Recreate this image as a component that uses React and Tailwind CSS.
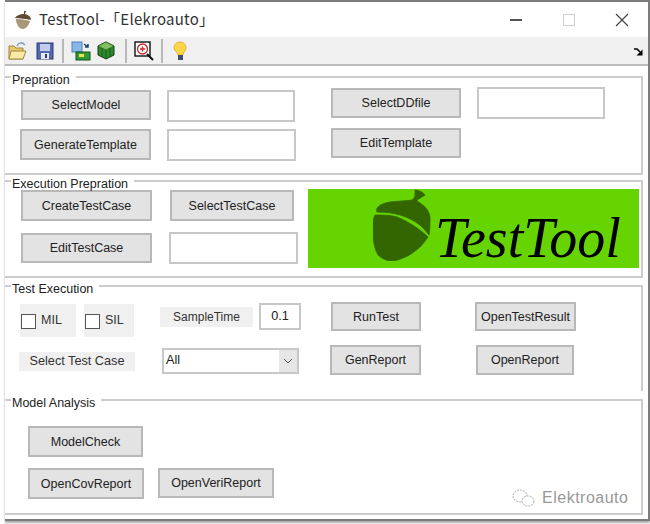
const sans = "font-['Liberation_Sans',Arial,sans-serif]"

function Btn({ w, h = 'h-[30px]', className = '', children }) {
  return (
    <button className={`${w} ${h} ${className} shrink-0 pt-[1px] bg-[#e3e3e3] border-2 border-[#b8b8b8] text-[12.5px] text-[#222] flex items-center justify-center`}>
      {children}
    </button>
  )
}

function Field({ w, className = '', children }) {
  return (
    <div className={`${w} h-[32px] ${className} shrink-0 bg-white border-2 border-[#c8c8c8] text-[12.7px] text-[#222] flex items-center justify-center`}>
      {children}
    </div>
  )
}

function Label({ className = '', children }) {
  return <div className={`${className} shrink-0 bg-[#f0f0f0] text-[#333] flex items-center justify-center`}>{children}</div>
}

function Group({ title, className = '', children }) {
  return (
    <fieldset className={`${className} shrink-0 border-2 border-l-0 border-[#cccccc]`}>
      <legend className="ml-[6px] pl-[1px] pr-[6px] text-[12.5px] leading-[12px] text-[#222]">
        <span className="inline-block translate-y-[3px]">{title}</span>
      </legend>
      {children}
    </fieldset>
  )
}

function Check({ label, w, className = '' }) {
  return (
    <div className={`${w} h-[33px] mt-[2px] ${className} shrink-0 bg-[#f0f0f0] flex items-center pl-[1px] gap-[5px] text-[12.5px] text-[#333]`}>
      <span className="w-[15px] h-[15px] bg-white border border-[#555] mt-[2px]"></span>
      {label}
    </div>
  )
}

function Acorn() {
  return (
    <svg width="58" height="72" viewBox="0 0 58 72" className="shrink-0 self-start">
      <path d="M42 1 C45 1 50 3 52 6 L44 11 C44 12 45 13 47 14 C53 18 57 23 57 29 C57 35 57 41 56 46 C53 42 50 39 47 36 C40 31 34 28 27 26 C20 24 12 23 4 23 C3 21 4 19 5 18 C8 15 12 14 17 13 C25 12 33 12 39 11 C41 9 42 8 42 6 C42 4 42 3 42 1 Z" fill="#336600" stroke="#336600" strokeWidth="0.8" />
      <path d="M2 26 C10 26 17 26 24 28 C32 31 38 35 44 39 C48 42 52 45 55 48 C52 52 50 55 47 58 C41 63 36 67 30 69 C26 71 21 72 17 72 C12 71 8 69 5 66 C2 61 1 55 0 49 C0 43 0 38 0 33 C0 31 1 28 2 26 Z" fill="#336600" stroke="#336600" strokeWidth="0.8" />
    </svg>
  )
}

const icons = {
  open: (
    <svg width="19" height="19" viewBox="0 0 19 19" className="shrink-0">
      <path d="M9 5 C11 1 14 1 17 4" fill="none" stroke="#7a9cc0" strokeWidth="1.5" />
      <path d="M1 5 H6 L8 7 H15 V18 H1 Z" fill="#e8c868" stroke="#a08840" />
      <path d="M1 18 L3 10 H18 L15 18 Z" fill="#fbe9a4" stroke="#a08840" />
    </svg>
  ),
  save: (
    <svg width="18" height="18" viewBox="0 0 18 18" className="shrink-0">
      <rect x="1" y="1" width="16" height="16" fill="#5468b0" stroke="#2c3878" />
      <rect x="4" y="2" width="10" height="7" fill="#c4ccec" />
      <rect x="5" y="11" width="8" height="6" fill="#e8e8f0" />
      <rect x="9" y="12" width="2" height="4" fill="#2c3878" />
    </svg>
  ),
  sim: (
    <svg width="20" height="20" viewBox="0 0 20 20" className="shrink-0">
      <rect x="1" y="1" width="10" height="10" fill="#88b8e8" stroke="#5080b0" />
      <rect x="5" y="11" width="14" height="8" fill="#2f9a3a" stroke="#14501c" />
      <rect x="8" y="13" width="5" height="3" fill="#f0e050" />
      <path d="M13 3 L17 6 M17 3 V6 H14" fill="none" stroke="#204070" strokeWidth="1.5" />
    </svg>
  ),
  cube: (
    <svg width="18" height="19" viewBox="0 0 18 19" className="shrink-0">
      <path d="M9 1 L17 5 V14 L9 18 L1 14 V5 Z" fill="#2e8a2e" stroke="#143c14" />
      <path d="M1 5 L9 9 L17 5 L9 1 Z" fill="#80c060" stroke="#2a5a20" strokeWidth="0.7" />
      <path d="M9 9 V18 M5 7 V16 M13 7 V16" stroke="#145014" strokeWidth="0.8" />
    </svg>
  ),
  zoom: (
    <svg width="20" height="20" viewBox="0 0 20 20" className="shrink-0">
      <rect x="1" y="1" width="15" height="14" fill="#fff" stroke="#111" strokeWidth="1.4" />
      <circle cx="8.5" cy="8" r="5" fill="#fff" stroke="#d02828" strokeWidth="1.3" />
      <path d="M6 8 H11 M8.5 5.5 V10.5" stroke="#d02828" strokeWidth="1.5" />
      <path d="M13 13 L19 19" stroke="#111" strokeWidth="2" />
    </svg>
  ),
  bulb: (
    <svg width="14" height="20" viewBox="0 0 14 20" className="shrink-0">
      <path d="M7 1 C11 1 13 4 13 7 C13 10 10 11 10 14 H5 C5 11 1 10 1 7 C1 4 3 1 7 1 Z" fill="#fbd64a" stroke="#e8b030" />
      <rect x="5" y="14" width="5" height="5" fill="#405068" />
    </svg>
  ),
}

function Sep({ className = '' }) {
  return <span className={`${className} w-[2px] h-[24px] bg-[#b8b8b8] shrink-0`}></span>
}

export default function App() {
  return (
    <div className={`${sans} w-[650px] h-[524px] bg-white overflow-hidden`}>
      <div className="ml-[5px] w-[645px] h-[521px] border-t-2 border-r-2 border-b-2 border-[#7c7c7c] shadow-[0_2px_2px_#aaaaaa] flex flex-col">
        {/* Title bar */}
        <div className="h-[35px] flex items-center shrink-0 pl-[9px] pr-[19px]">
          <svg width="18" height="20" viewBox="0 0 18 20" className="shrink-0">
            <path d="M10 1 L12 1 L11 4 C15 5 17 7 17 10 C12 9 6 8 1 8 C2 6 6 4 10 4 Z" fill="#5e4a32" />
            <path d="M2 9 C7 9 13 10 16 11 C15 15 12 19 9 19 C5 19 2 14 2 9 Z" fill="#a89878" />
          </svg>
          <span className="ml-[7px] text-[15px] tracking-[0.25px] text-[#333] font-['Noto_Sans_CJK_SC',sans-serif]">TestTool-「Elekroauto」</span>
          <span className="ml-auto w-[12px] h-[2px] bg-[#555] shrink-0"></span>
          <span className="ml-[41px] w-[12px] h-[12px] border border-[#cfcfcf] shrink-0"></span>
          <svg width="14" height="14" viewBox="0 0 14 14" className="ml-[40px] shrink-0">
            <path d="M1 1 L13 13 M13 1 L1 13" stroke="#444" strokeWidth="1.2" />
          </svg>
        </div>

        {/* Toolbar */}
        <div className="h-[29px] bg-[#f0f0f0] border-b-2 border-[#bdbdbd] flex items-center shrink-0 pl-[3px]">
          {icons.open}
          <span className="ml-[9px] flex">{icons.save}</span>
          <Sep className="ml-[8px]" />
          <span className="ml-[7px] flex">{icons.sim}</span>
          <span className="ml-[6px] flex">{icons.cube}</span>
          <Sep className="ml-[10px]" />
          <span className="ml-[7px] flex">{icons.zoom}</span>
          <Sep className="ml-[7px]" />
          <span className="ml-[10px] flex">{icons.bulb}</span>
          <svg width="9" height="8" viewBox="0 0 9 8" className="ml-auto mr-[5px] mt-[2px] shrink-0">
            <path d="M0 1 H3 L6 4" fill="none" stroke="#000" strokeWidth="1.6" />
            <path d="M8.5 1.5 V7.5 H2.5 Z" fill="#000" />
          </svg>
        </div>

        <div className="flex-1 flex flex-col mr-[5px]">
          <Group title="Prepration" className="mt-[5px] h-[104px]">
            <div className="flex items-start pl-[16px] pt-[4px]">
              <Btn w="w-[130px]" className="mt-[3px]">SelectModel</Btn>
              <Field w="w-[128px]" className="ml-[16px] mt-[3px]" />
              <Btn w="w-[130px]" className="ml-[36px] mt-[1px]">SelectDDfile</Btn>
              <Field w="w-[128px]" className="ml-[16px]" />
            </div>
            <div className="flex items-start pl-[15px] mt-[6px]">
              <Btn w="w-[131px]" h="h-[31px]" className="mt-[1px]">GenerateTemplate</Btn>
              <Field w="w-[129px]" className="ml-[16px] mt-[1px]" />
              <Btn w="w-[130px]" className="ml-[35px]">EditTemplate</Btn>
            </div>
          </Group>

          <Group title="Execution Prepration" className="h-[103px]">
            <div className="flex items-start pl-[16px]">
              <div className="flex flex-col w-[276px] shrink-0 mt-[3px]">
                <div className="flex items-start">
                  <Btn w="w-[131px]" h="h-[31px]">CreateTestCase</Btn>
                  <Btn w="w-[124px]" h="h-[31px]" className="ml-[18px]">SelectTestCase</Btn>
                </div>
                <div className="flex items-start mt-[11px]">
                  <Btn w="w-[131px]" className="mt-[1px]">EditTestCase</Btn>
                  <Field w="w-[129px]" className="ml-[17px]" />
                </div>
              </div>
              <div className="ml-[11px] mt-[2px] w-[331px] h-[79px] bg-[#66d400] shrink-0 flex items-start pl-[65px] overflow-hidden">
                <Acorn />
                <span className="ml-[4px] mt-[21px] text-[56px] leading-none italic text-black font-['Liberation_Serif',serif]">TestTool</span>
              </div>
            </div>
          </Group>

          <Group title="Test Execution" className="mt-[2px] h-[111px] border-b-0">
            <div className="flex items-start pl-[15px] pt-[10px]">
              <Check label="MIL" w="w-[56px]" />
              <Check label="SIL" w="w-[50px]" className="ml-[8px]" />
              <Label className="ml-[26px] mt-[5px] w-[93px] h-[20px] text-[12px]">SampleTime</Label>
              <Field w="w-[42px]" className="ml-[6px] !h-[27px] mt-[1px]">0.1</Field>
              <Btn w="w-[90px]" h="h-[29px]" className="ml-[30px]">RunTest</Btn>
              <Btn w="w-[101px]" h="h-[29px]" className="ml-[54px]">OpenTestResult</Btn>
            </div>
            <div className="flex items-start pl-[14px] mt-[8px]">
              <Label className="w-[116px] h-[19px] mt-[7px] text-[12.7px]">Select Test Case</Label>
              <div className="ml-[27px] mt-[3px] w-[137px] h-[26px] shrink-0 bg-white border-2 border-[#c8c8c8] text-[12.7px] text-[#222] flex items-center pl-[2px]">
                <span className="flex-1">All</span>
                <span className="w-[18px] h-full bg-[#e6e6e6] flex items-center justify-center">
                  <svg width="10" height="6" viewBox="0 0 10 6"><path d="M1 1 L5 5 L9 1" fill="none" stroke="#555" /></svg>
                </span>
              </div>
              <Btn w="w-[91px]" className="ml-[31px]">GenReport</Btn>
              <Btn w="w-[98px]" className="ml-[55px]">OpenReport</Btn>
            </div>
          </Group>

          <Group title="Model Analysis" className="mt-[3px] h-[121px]">
            <div className="pl-[23px] pt-[20px]">
              <Btn w="w-[115px]" h="h-[31px]">ModelCheck</Btn>
              <div className="flex items-start mt-[11px]">
                <Btn w="w-[116px]" h="h-[31px]">OpenCovReport</Btn>
                <Btn w="w-[116px]" h="h-[30px]" className="ml-[14px]">OpenVeriReport</Btn>
                <div className="ml-[238px] mt-[20px] h-[20px] flex items-center gap-[7px] text-[16px] tracking-[0.5px] text-[#999] whitespace-nowrap">
                  <svg width="23" height="18" viewBox="0 0 23 18" fill="none" stroke="#aaa" strokeDasharray="2 1" className="shrink-0">
                    <ellipse cx="8" cy="7" rx="7" ry="6" />
                    <ellipse cx="16" cy="12" rx="6" ry="5" fill="#fff" />
                  </svg>
                  Elektroauto
                </div>
              </div>
            </div>
          </Group>
        </div>
      </div>
    </div>
  )
}
